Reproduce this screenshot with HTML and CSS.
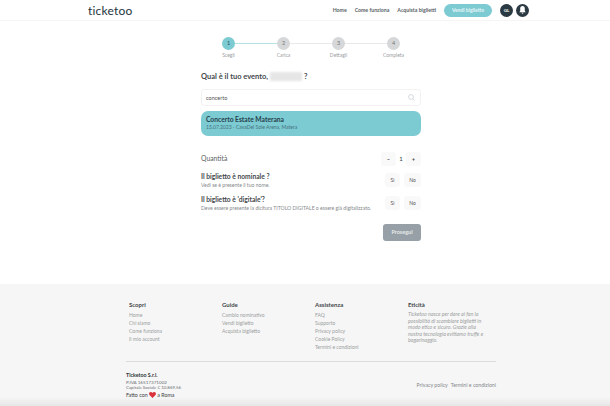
FILE: index.html
```html
<!DOCTYPE html>
<html lang="it">
<head>
  <meta charset="UTF-8">
  <title>Ticketoo</title>
  <link rel="stylesheet" href="styles.css">
</head>
<body>
  <header class="topbar">
    <div class="logo">ticketoo</div>
    <nav class="nav">
      <a class="nav-link">Home</a>
      <a class="nav-link">Come funziona</a>
      <a class="nav-link">Acquista biglietti</a>
      <a class="sell-btn">Vendi biglietto</a>
      <span class="round-btn">GL</span>
      <span class="round-btn">
        <svg width="7" height="8" viewBox="0 0 7 8"><path d="M3.5 0C2 0 1.2 1 1.2 2.6V5L.3 6.2h6.4L5.8 5V2.6C5.8 1 5 0 3.5 0zM2.6 6.8a.9.9 0 0 0 1.8 0z" fill="#fff"/></svg>
      </span>
    </nav>
  </header>

  <main class="wizard">
    <div class="steps">
      <div class="step active"><span class="step-num">1</span><span class="step-label">Scegli</span></div>
      <div class="step"><span class="step-num">2</span><span class="step-label">Carica</span></div>
      <div class="step"><span class="step-num">3</span><span class="step-label">Dettagli</span></div>
      <div class="step"><span class="step-num">4</span><span class="step-label">Completa</span></div>
    </div>

    <h2 class="question">Qual è il tuo evento, <span class="blurred"></span> ?</h2>

    <div class="search">
      <span>concerto</span>
      <svg width="7" height="7" viewBox="0 0 7 7" fill="none" stroke="#ccd2d4" stroke-width=".8"><circle cx="3" cy="3" r="2.4"/><path d="M4.8 4.8L6.6 6.6"/></svg>
    </div>

    <div class="event">
      <div class="event-title">Concerto Estate Materana</div>
      <div class="event-info">15.07.2023 - CavaDel Sole Arena, Matera</div>
    </div>

    <div class="row row-qty">
      <div class="row-title qty-title">Quantità</div>
      <div class="qty">
        <span class="small-btn qty-btn">−</span>
        <span class="qty-num">1</span>
        <span class="small-btn qty-btn">+</span>
      </div>
    </div>

    <div class="row">
      <div>
        <div class="row-title">Il biglietto è nominale ?</div>
        <div class="row-sub">Vedi se è presente il tuo nome.</div>
      </div>
      <div class="choice"><span class="small-btn">Sì</span><span class="small-btn">No</span></div>
    </div>

    <div class="row">
      <div>
        <div class="row-title">Il biglietto è 'digitale'?</div>
        <div class="row-sub">Deve essere presente la dicitura TITOLO DIGITALE o essere già digitalizzato.</div>
      </div>
      <div class="choice"><span class="small-btn">Sì</span><span class="small-btn">No</span></div>
    </div>

    <div class="actions"><span class="next-btn">Prosegui</span></div>
  </main>

  <footer class="footer">
    <div class="footer-cols">
      <div class="col">
        <h4>Scopri</h4>
        <a>Home</a><a>Chi siamo</a><a>Come funziona</a><a>Il mio account</a>
      </div>
      <div class="col">
        <h4>Guide</h4>
        <a>Cambio nominativo</a><a>Vendi biglietto</a><a>Acquista biglietto</a>
      </div>
      <div class="col">
        <h4>Assistenza</h4>
        <a>FAQ</a><a>Supporto</a><a>Privacy policy</a><a>Cookie Policy</a><a>Termini e condizioni</a>
      </div>
      <div class="col col-ethics">
        <h4>Eticità</h4>
        <p>Ticketoo nasce per dare ai fan la possibilità di scambiare biglietti in modo etico e sicuro. Grazie alla nostra tecnologia evitiamo truffe e bagarinaggio.</p>
      </div>
    </div>
    <div class="footer-bottom">
      <div class="company">
        <strong>Ticketoo S.r.l.</strong>
        <span class="vat">P.IVA 16517371002</span>
        <span class="capital">Capitale Sociale € 10.869,56</span>
        <span class="made">Fatto con <svg class="heart" width="7" height="6" viewBox="0 0 7 6"><path d="M3.5 6L.5 3C-.5 1.8.3 0 1.8 0c.8 0 1.4.4 1.7 1C3.8.4 4.4 0 5.2 0c1.500 0 2.300 1.800 1.300 3z" fill="#d9323c"/></svg> a Roma</span>
      </div>
      <div class="legal"><a>Privacy policy</a><a>Termini e condizioni</a></div>
    </div>
  </footer>
</body>
</html>
```

FILE: styles.css
```css
:root {
  --teal: #7ccad2;
  --dark: #2b3a42;
  --ink: #43484b;
  --grey-text: #9b9ea0;
  --soft: #f6f6f6;
}
html, body {
  overflow: hidden;
}
body {
  margin: 0;
  width: 610px;
  height: 406px;
  background: #fff;
  font-family: "Lato", "Noto Sans", sans-serif;
  color: var(--dark);
}
.topbar {
  display: flex;
  justify-content: space-between;
  align-items: center;
  height: 20px;
  padding: 0 81px 0 88px;
  border-bottom: 1px solid #f5f5f5;
}
.logo {
  font-size: 12px;
  letter-spacing: .2px;
  color: #24343c;
}
.nav {
  display: flex;
  align-items: center;
}
.nav-link {
  font-size: 5.2px;
  font-weight: 700;
  margin-right: 8px;
  color: #5a6368;
}
.sell-btn {
  display: block;
  width: 48px;
  line-height: 13px;
  margin-right: 5px;
  text-align: center;
  font-size: 5px;
  font-weight: 700;
  color: #e8f6f7;
  background: var(--teal);
  border-radius: 7px;
}
.round-btn {
  display: flex;
  align-items: center;
  justify-content: center;
  width: 13px;
  height: 13px;
  margin-left: 3px;
  border-radius: 50%;
  background: var(--dark);
  color: #fff;
  font-size: 4.5px;
  font-weight: 700;
}
.wizard {
  width: 220px;
  height: 263px;
  margin-left: 201px;
}
.steps {
  display: flex;
  height: 45px;
  padding-top: 16px;
  box-sizing: border-box;
}
.step {
  position: relative;
  flex: 0 0 55px;
  display: flex;
  flex-direction: column;
  align-items: center;
  font-size: 5px;
  color: #9a9d9f;
}
.step:not(:last-child)::after {
  content: "";
  position: absolute;
  top: 6px;
  left: 34px;
  width: 42px;
  height: 1px;
  background: #e8eaea;
}
.step.active::after {
  background: #b5e0e4;
}
.step-num {
  width: 13px;
  height: 13px;
  line-height: 13px;
  text-align: center;
  border-radius: 50%;
  background: #d6d7d8;
  color: #777;
  font-size: 5.5px;
}
.active .step-num {
  background: var(--teal);
  color: #27505a;
}
.step-label {
  margin-top: 2px;
}
.question {
  margin: 0 0 3px;
  height: 20px;
  display: flex;
  align-items: center;
  gap: 2px;
  font-size: 7.5px;
  font-weight: 700;
  color: var(--ink);
}
.blurred {
  display: inline-block;
  width: 32px;
  height: 9px;
  background: #e6e6e6;
  filter: blur(1px);
}
.search {
  display: flex;
  justify-content: space-between;
  align-items: center;
  height: 17px;
  box-sizing: border-box;
  padding: 0 5px 0 4px;
  border: 1px solid #f2f2f2;
  border-radius: 3px;
  font-size: 5.5px;
  color: #555;
}
.event {
  height: 25px;
  box-sizing: border-box;
  margin-top: 5px;
  padding: 4px 5px;
  background: var(--teal);
  border-radius: 7px;
}
.event-title {
  font-size: 6.7px;
  line-height: 9px;
  font-weight: 700;
  color: #27424c;
}
.event-info {
  font-size: 5px;
  line-height: 7px;
  color: #46727c;
}
.row {
  display: flex;
  justify-content: space-between;
  align-items: center;
  height: 20px;
  margin-bottom: 3px;
}
.row-qty {
  margin-top: 14px;
  height: 17px;
}
.row-title {
  font-size: 6.7px;
  line-height: 9px;
  font-weight: 700;
  color: var(--ink);
}
.qty-title {
  font-size: 6.8px;
  font-weight: 400;
  color: #5a5f62;
}
.row-sub {
  margin-top: 1px;
  font-size: 5.1px;
  line-height: 7px;
  color: #85898c;
}
.qty {
  display: flex;
  align-items: center;
}
.qty-num {
  width: 10px;
  text-align: center;
  font-size: 6px;
}
.small-btn {
  display: block;
  width: 15px;
  line-height: 14px;
  text-align: center;
  font-size: 5px;
  color: #555;
  background: #f9f9f9;
  border-radius: 3px;
}
.choice .small-btn:last-child {
  width: 17px;
}
.qty-btn {
  font-weight: 700;
  color: #333;
}
.choice {
  display: flex;
  gap: 4px;
}
.actions {
  display: flex;
  justify-content: flex-end;
  margin-top: 11px;
}
.next-btn {
  width: 38px;
  line-height: 17px;
  text-align: center;
  font-size: 5.5px;
  font-weight: 700;
  color: #e6e9ea;
  background: #96a0a6;
  border-radius: 3px;
}
.footer {
  height: 122px;
  box-sizing: border-box;
  padding: 16px 114px 0 126px;
  background: linear-gradient(var(--soft) 113px, #e6e6e6);
}
.footer-cols {
  display: flex;
  height: 61px;
  padding-left: 3px;
  border-bottom: 1px solid #dcdcdc;
}
.col {
  flex: 0 0 93px;
  display: flex;
  flex-direction: column;
}
.col h4 {
  margin: 0 0 2px;
  font-size: 6px;
  font-weight: 700;
  line-height: 9px;
  color: var(--ink);
}
.col a {
  font-size: 5px;
  line-height: 8px;
  color: var(--grey-text);
}
.col-ethics {
  flex: 0 0 80px;
}
.col-ethics p {
  margin: 0;
  font-size: 5.3px;
  line-height: 6.5px;
  font-style: italic;
  color: var(--grey-text);
}
.footer-bottom {
  display: flex;
  justify-content: space-between;
  align-items: center;
  padding-top: 10px;
}
.company {
  display: flex;
  flex-direction: column;
  font-size: 5.3px;
  line-height: 6.5px;
  color: #6a6f72;
}
.company strong {
  color: #2f3538;
}
.vat {
  font-size: 4.6px;
}
.capital {
  font-size: 4.4px;
}
.made {
  height: 6.5px;
  color: #3b4145;
}
.heart {
  vertical-align: -1px;
}
.legal {
  display: flex;
  gap: 3px;
  font-size: 5.2px;
  color: #85898c;
}
```
